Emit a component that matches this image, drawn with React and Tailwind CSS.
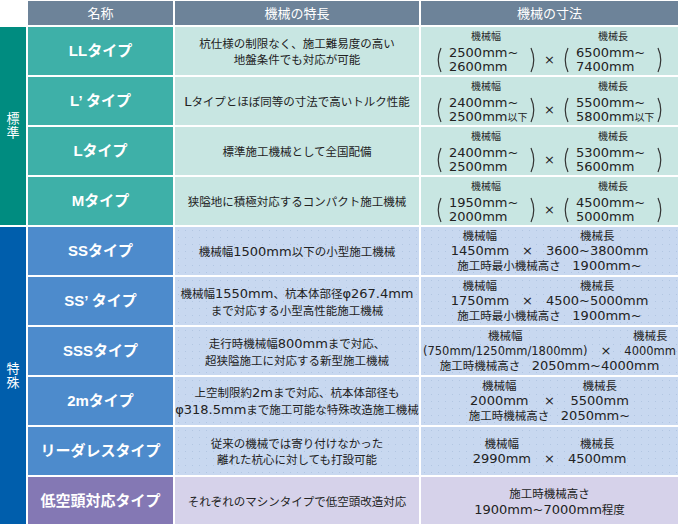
import React from 'react'

const LAT = "font-['DejaVu_Sans','Noto_Sans_CJK_JP',sans-serif] text-[13px]"
const LAT_SM = "font-['DejaVu_Sans','Noto_Sans_CJK_JP',sans-serif] text-[11.5px]"
const LATIN = /^[A-Za-z0-9.\/φ~()×]+$/

const mix = (s, cls = LAT) =>
  s.split(/([A-Za-z0-9.\/φ~()×]+)/).map((p, i) =>
    LATIN.test(p) ? <span key={i} className={cls}>{p}</span> : p
  )

const std = [
  { name: 'LLタイプ', desc: ['杭仕様の制限なく、施工難易度の高い', '地盤条件でも対応が可能'], a: ['2500mm~', '2600mm'], b: ['6500mm~', '7400mm'] },
  { name: 'L’ タイプ', desc: ['Lタイプとほぼ同等の寸法で高いトルク性能'], a: ['2400mm~', '2500mm以下'], b: ['5500mm~', '5800mm以下'] },
  { name: 'Lタイプ', desc: ['標準施工機械として全国配備'], a: ['2400mm~', '2500mm'], b: ['5300mm~', '5600mm'] },
  { name: 'Mタイプ', desc: ['狭隘地に積極対応するコンパクト施工機械'], a: ['1950mm~', '2000mm'], b: ['4500mm~', '5000mm'] },
]

const spec = [
  { name: 'SSタイプ', desc: ['機械幅1500mm以下の小型施工機械'], w: '1450mm', l: '3600~3800mm', h: '施工時最小機械高さ　1900mm~' },
  { name: 'SS’ タイプ', desc: ['機械幅1550mm、杭本体部径φ267.4mm', 'まで対応する小型高性能施工機械'], w: '1750mm', l: '4500~5000mm', h: '施工時最小機械高さ　1900mm~' },
  { name: 'SSSタイプ', desc: ['走行時機械幅800mmまで対応、', '超狭隘施工に対応する新型施工機械'], w: '(750mm/1250mm/1800mm)', l: '4000mm', h: '施工時機械高さ　2050mm~4000mm', small: true },
  { name: '2mタイプ', desc: ['上空制限約2mまで対応、杭本体部径も', 'φ318.5mmまで施工可能な特殊改造施工機械'], w: '2000mm', l: '5500mm', h: '施工時機械高さ　2050mm~' },
  { name: 'リーダレスタイプ', desc: ['従来の機械では寄り付けなかった', '離れた杭心に対しても打設可能'], w: '2990mm', l: '4500mm' },
]

const H = ({ children }) => (
  <div className="bg-[#6d8399] text-white text-[13px] flex items-center justify-center">{children}</div>
)

const Name = ({ children, bg }) => (
  <div className={`${bg} flex items-center justify-center text-white font-bold text-[15px] font-['Liberation_Sans','Noto_Sans_CJK_JP',sans-serif]`}>
    {children}
  </div>
)

const Desc = ({ lines, bg }) => (
  <div className={`${bg} flex flex-col items-center justify-center text-[11.5px] leading-[16px]`}>
    {lines.map((l, i) => <div key={i}>{mix(l)}</div>)}
  </div>
)

const Paren = ({ right }) => (
  <svg width="6" height="26" viewBox="0 0 6 26" className="shrink-0">
    <path d={right ? 'M1 1 Q6.5 13 1 25' : 'M5 1 Q-0.5 13 5 25'} fill="none" stroke="#333" strokeWidth="1.2" />
  </svg>
)

const Group = ({ lines }) => (
  <div className="flex items-center w-[100px] h-[28px]">
    <Paren />
    <div className="flex-1 pl-[7px] flex flex-col leading-[14px] text-[10px]">
      {lines.map((l, i) => <div key={i}>{mix(l)}</div>)}
    </div>
    <Paren right />
  </div>
)

const StdDims = ({ a, b }) => (
  <div className="bg-[#c8e6e2] flex items-center justify-center pt-[2px]">
    <div className="grid grid-cols-[100px_auto_100px] gap-x-[8px] items-center">
      <div className="text-center text-[10px] leading-[12px] mb-[4px]">機械幅</div>
      <div />
      <div className="text-center text-[10px] leading-[12px] mb-[4px]">機械長</div>
      <Group lines={a} />
      <span className={LAT}>×</span>
      <Group lines={b} />
    </div>
  </div>
)

const dots = 'bg-[#c8d8f0] bg-[radial-gradient(circle,#b2c6e2_0.7px,transparent_0.9px)] bg-[length:7px_7px]'

const SpecDims = ({ w, l, h, small }) => (
  <div className={`${dots} flex items-center justify-center`}>
    <div className="grid grid-cols-[auto_auto_auto] gap-x-[13px] items-center justify-items-center text-[11.5px] leading-[14.5px]">
      <div>機械幅</div>
      <div />
      <div>機械長</div>
      <div>{mix(w, small ? LAT_SM : LAT)}</div>
      <div>{mix('×')}</div>
      <div>{mix(l, small ? LAT_SM : LAT)}</div>
      {h && <div className="col-span-3">{mix(h)}</div>}
    </div>
  </div>
)

const Cat = ({ text, bg, span }) => (
  <div className={`${bg} ${span} flex items-center justify-center text-white`}>
    <span className="[writing-mode:vertical-rl] [text-orientation:upright] text-[13px] tracking-[1px] leading-none">{text}</span>
  </div>
)

export default function App() {
  return (
    <div className="w-[678px] h-[524px] overflow-hidden bg-white text-[#222] font-['Noto_Sans_CJK_JP',sans-serif]">
      <div className="grid grid-cols-[26px_145px_244px_257px] grid-rows-[24px_repeat(10,48px)] gap-[2px] pt-px">
        <div />
        <H>名称</H>
        <H>機械の特長</H>
        <H>機械の寸法</H>

        <Cat text="標準" bg="bg-[#008c80]" span="row-span-4" />
        {std.map((r) => (
          <React.Fragment key={r.name}>
            <Name bg="bg-[#3eb0a8]">{r.name}</Name>
            <Desc bg="bg-[#c8e6e2]" lines={r.desc} />
            <StdDims a={r.a} b={r.b} />
          </React.Fragment>
        ))}

        <Cat text="特殊" bg="bg-[#005eac]" span="row-span-6" />
        {spec.map((r) => (
          <React.Fragment key={r.name}>
            <Name bg="bg-[#4d8bcc]">{r.name}</Name>
            <Desc bg={dots} lines={r.desc} />
            <SpecDims w={r.w} l={r.l} h={r.h} small={r.small} />
          </React.Fragment>
        ))}

        <Name bg="bg-[#8478b4]">低空頭対応タイプ</Name>
        <Desc bg="bg-[#d6d2ea]" lines={['それぞれのマシンタイプで低空頭改造対応']} />
        <div className="bg-[#d6d2ea] flex flex-col items-center justify-center text-[11.5px] leading-[16px]">
          <div>施工時機械高さ</div>
          <div>{mix('1900mm~7000mm程度')}</div>
        </div>
      </div>
    </div>
  )
}
